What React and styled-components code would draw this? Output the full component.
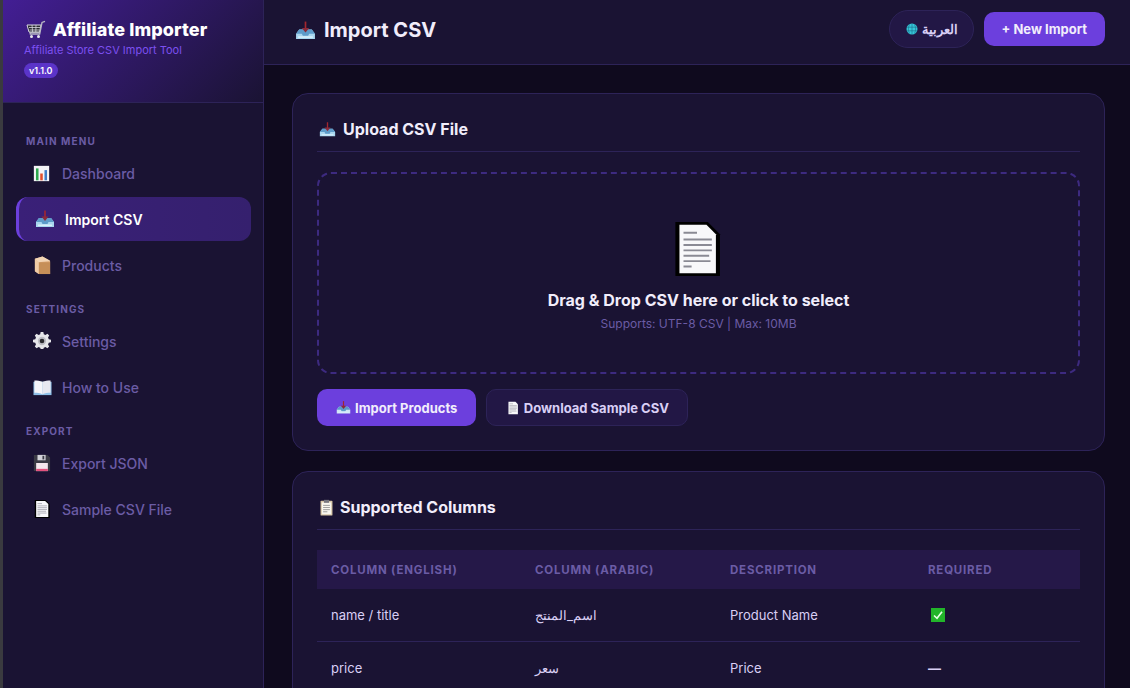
import styled, { createGlobalStyle } from 'styled-components';

const GlobalStyle = createGlobalStyle`
  html, body {
    margin: 0;
    height: 100%;
    overflow: hidden;
    background: #0f0a1e;
  }
  * { box-sizing: border-box; }
`;

const Layout = styled.div`
  display: flex;
  width: 1130px;
  height: 688px;
  overflow: hidden;
  font-family: Inter, "Noto Sans", sans-serif;
  background: #0f0a1e;
  border-left: 3px solid #3a3a3f;
`;

const Sidebar = styled.aside`
  width: 261px;
  flex-shrink: 0;
  background: #1a1333;
  border-right: 1px solid #2d2358;
`;

const Brand = styled.div`
  height: 103px;
  padding: 17px 22px 0 21px;
  background: linear-gradient(135deg, #431e94 0%, #1a1333 100%);
  border-bottom: 1px solid #2d2358;
`;

const BrandTitle = styled.h1`
  display: flex;
  align-items: center;
  gap: 7px;
  margin: 0 0 0 2px;
  height: 24px;
  font-size: 18px;
  font-weight: 800;
  color: #fff;
  letter-spacing: 0.1px;
`;

const BrandSub = styled.div`
  margin-top: 2px;
  font-size: 11px;
  line-height: 14px;
  color: #7c50f0;
`;

const Version = styled.span`
  display: inline-block;
  margin-top: 6px;
  padding: 0 5px;
  height: 15px;
  line-height: 15px;
  font-size: 9px;
  font-weight: 600;
  color: #fff;
  background: #5b34c9;
  border-radius: 8px;
`;

const Nav = styled.nav`
  padding: 31px 12px 0 13px;
`;

const NavLabel = styled.div`
  height: 14px;
  margin: ${(p) => (p.$first ? '0' : '15px')} 0 3px 10px;
  font-size: 10px;
  line-height: 14px;
  font-weight: 700;
  letter-spacing: 1.1px;
  color: #6b5ca5;
`;

const NavItem = styled.a`
  display: flex;
  align-items: center;
  gap: ${(p) => (p.$active ? '12px' : '11px')};
  height: 44px;
  margin-bottom: 2px;
  padding-left: ${(p) => (p.$active ? '16px' : '17px')};
  font-size: 14px;
  font-weight: ${(p) => (p.$active ? 600 : 500)};
  color: ${(p) => (p.$active ? '#fff' : '#6b5ca5')};
  border-radius: 12px;
  background: ${(p) => (p.$active ? 'linear-gradient(90deg, #3a2078, #35206e)' : 'transparent')};
  border-left: ${(p) => (p.$active ? '3px solid #6c3fdd' : '0')};
`;

const IconSlot = styled.span`
  display: flex;
  width: 18px;
  flex-shrink: 0;
`;

const Content = styled.main`
  flex: 1;
  min-width: 0;
`;

const Topbar = styled.header`
  display: flex;
  align-items: center;
  justify-content: space-between;
  height: 65px;
  padding: 0 25px 6px 31px;
  background: #1a1333;
  border-bottom: 1px solid #2d2358;
`;

const PageTitle = styled.h2`
  display: flex;
  align-items: center;
  gap: 8px;
  margin: 2px 0 0;
  font-size: 20px;
  font-weight: 700;
  color: #f1edfb;
`;

const TopActions = styled.div`
  display: flex;
  align-items: center;
  gap: 10px;
`;

const LangButton = styled.button`
  display: flex;
  align-items: center;
  gap: 4px;
  height: 38px;
  padding: 0 15px 0 16px;
  font-family: inherit;
  font-size: 13px;
  font-weight: 600;
  color: #d9cff5;
  background: #221745;
  border: 1px solid #2d2358;
  border-radius: 19px;
`;

const Button = styled.button`
  display: inline-flex;
  align-items: center;
  justify-content: center;
  gap: 4px;
  height: ${(p) => p.$height || '37px'};
  padding: 0 ${(p) => p.$pad || '19px'};
  font-family: inherit;
  font-size: 13px;
  font-weight: 700;
  color: ${(p) => (p.$ghost ? '#d9cff5' : '#f1edfb')};
  background: ${(p) => (p.$ghost ? '#221745' : '#6c3fdd')};
  border: ${(p) => (p.$ghost ? '1px solid #2d2358' : '0')};
  border-radius: 10px;
`;

const Body = styled.div`
  padding: 28px 25px 0 28px;
`;

const Card = styled.section`
  padding: 24px;
  margin-bottom: 20px;
  background: #1a1333;
  border: 1px solid #2d2358;
  border-radius: 16px;
`;

const CardTitle = styled.h3`
  display: flex;
  align-items: center;
  gap: ${(p) => p.$gap};
  height: 34px;
  margin: 0 0 20px;
  padding: 0 0 11px ${(p) => p.$indent};
  font-size: 16px;
  font-weight: 700;
  color: #f1edfb;
  border-bottom: 1px solid #2d2358;
`;

const Dropzone = styled.div`
  display: flex;
  flex-direction: column;
  align-items: center;
  height: 202px;
  padding-top: 48px;
  border: 2px dashed #3d2a80;
  border-radius: 14px;
`;

const DropIcon = styled.div`
  display: flex;
  margin-right: 4px;
`;

const DropTitle = styled.div`
  margin-top: 14px;
  font-size: 16px;
  line-height: 20px;
  font-weight: 700;
  color: #f1edfb;
`;

const DropHint = styled.div`
  margin-top: 6px;
  font-size: 12px;
  line-height: 16px;
  color: #6b5ca5;
`;

const Actions = styled.div`
  display: flex;
  gap: 10px;
  margin-top: 15px;
`;

const Table = styled.table`
  width: 763px;
  border-collapse: separate;
  border-spacing: 0;
  table-layout: fixed;
`;

const Th = styled.th`
  width: ${(p) => p.$w};
  height: 39px;
  padding: 0 14px;
  text-align: left;
  font-size: 11.5px;
  font-weight: 700;
  letter-spacing: 0.8px;
  color: #6b5ca5;
  background: #251848;
`;

const Td = styled.td`
  height: 53px;
  padding: 0 14px;
  font-size: 13px;
  color: #d9cff5;
  border-bottom: 1px solid #2d2358;
`;

const CheckWrap = styled.span`
  display: flex;
  margin-left: 3px;
`;

const Dash = styled.span`
  font-weight: 700;
`;

const Svg = ({ size = 18, children, view = '0 0 20 20' }) => (
  <svg width={size} height={size} viewBox={view} style={{ flexShrink: 0 }}>
    {children}
  </svg>
);

const CartIcon = ({ size }) => (
  <Svg size={size}>
    <path d="M1 6h14l-1.5 7H3z" fill="#2b2b33" stroke="#d8d8e0" strokeWidth="1" />
    <path d="M3 8.5h11M3.5 11h10M6 6l.6 7M10 6l-.2 7" stroke="#d8d8e0" strokeWidth=".8" fill="none" />
    <path d="M13.5 13.6H4l.3 1.6h9.4L16 3.5l3-1.2" stroke="#b9b9c4" strokeWidth="1.3" fill="none" />
    <circle cx="5.5" cy="17.5" r="1.5" fill="#e8e8ee" />
    <circle cx="12.5" cy="17.5" r="1.5" fill="#e8e8ee" />
  </Svg>
);

const ChartIcon = ({ size }) => (
  <Svg size={size}>
    <rect x="1" y="1" width="18" height="18" fill="#f4f4f6" />
    <rect x="3.5" y="4" width="3" height="14" fill="#2fa84f" />
    <rect x="8.5" y="10" width="3" height="8" fill="#e0502f" />
    <rect x="13.5" y="6" width="3" height="12" fill="#3f7fc8" />
  </Svg>
);

const InboxIcon = ({ size, tone = '#a9d6ef' }) => (
  <Svg size={size}>
    <path d="M1 13l3-4h12l3 4v5H1z" fill={tone} />
    <path d="M1 13h5.5l1 2h5l1-2H19l-3-4H4z" fill="#5d9bc9" />
    <rect x="9.2" y="1.5" width="1.6" height="7" fill="#a3262e" />
    <path d="M6.5 7.5h7L10 12z" fill="#8a2a3a" />
    <rect x="3" y="15.5" width="14" height="1.5" fill="#d8effa" />
  </Svg>
);

const BoxIcon = ({ size }) => (
  <Svg size={size}>
    <path d="M2 3l8-2.5L18 5v14H6l-4-3z" fill="#e2b488" />
    <path d="M6 6.5h12V19H6z" fill="#c68f58" />
    <path d="M2 3l4 3.5V19l-4-3z" fill="#f0cba6" />
    <path d="M2 3L10 .5 18 5 6 6.5z" fill="#f2d5b5" />
  </Svg>
);

const GearIcon = ({ size }) => (
  <Svg size={size}>
    <path
      d="M8.5 1h3l.5 2.5 1.8.8L16 3l2 2-1.3 2.2.8 1.8 2.5.5v3l-2.5.5-.8 1.8L18 17l-2 2-2.2-1.3-1.8.8-.5 1.5h-3l-.5-1.5-1.8-.8L4 19l-2-2 1.3-2.2-.8-1.8L0 12.5v-3l2.5-.5.8-1.8L2 5l2-2 2.2 1.3L8 3.5z"
      fill="#e6e6ea"
      transform="translate(0 -1)"
    />
    <circle cx="10" cy="10" r="4.6" fill="#bdbdc4" />
    <circle cx="10" cy="10" r="2.6" fill="#2a2a2e" />
  </Svg>
);

const BookIcon = ({ size }) => (
  <Svg size={size}>
    <path d="M0.5 4h19v14h-19z" fill="#8fc0e8" />
    <path d="M1.5 2.5c3 0 6 .3 8.5 1.5v13c-2.5-1-5.5-1.5-8.5-1.5z" fill="#f6f6fa" />
    <path d="M18.5 2.5c-3 0-6 .3-8.5 1.5v13c2.5-1 5.5-1.5 8.5-1.5z" fill="#e8e8f0" />
  </Svg>
);

const SaveIcon = ({ size }) => (
  <Svg size={size}>
    <path d="M1 1h15l3 3v15H1z" fill="#3a3a44" />
    <rect x="5" y="1" width="9" height="6" fill="#d2d2d8" />
    <rect x="10.5" y="2" width="2" height="4" fill="#3a3a44" />
    <rect x="3.5" y="10" width="13" height="9" fill="#f5e8ee" />
    <rect x="3.5" y="16.5" width="13" height="2.5" fill="#e2527e" />
  </Svg>
);

const PageIcon = ({ size, border }) => (
  <Svg size={size}>
    {border && <path d="M2 0h12l4.5 4.5V20H2z" fill="#000" />}
    <path d="M3.5 1h10l3.5 3.5V19H3.5z" fill="#f8f8fa" />
    <path d="M5 4h5M5 6.5h10.5M5 8.5h10.5M5 10.5h10.5M5 12.5h9.5M5 14.5h10M5 16.5h3" stroke="#8a8a94" strokeWidth=".7" />
  </Svg>
);

const ClipboardIcon = ({ size }) => (
  <Svg size={size}>
    <rect x="3" y="2" width="14" height="17.5" rx="1" fill="#d8c8a8" />
    <rect x="4.5" y="4" width="11" height="14" fill="#f8f6ef" />
    <rect x="7" y="1" width="6" height="3.5" fill="#77777f" />
    <path d="M6 7.5h8M6 10h8M6 12.5h8M6 15h5" stroke="#777" strokeWidth=".8" />
  </Svg>
);

const CheckIcon = () => (
  <Svg size={14} view="0 0 14 14">
    <rect width="14" height="14" fill="#22b52a" />
    <path d="M3 7.5l3 2.8L11 3.8" fill="none" stroke="#e8ffe8" strokeWidth="1.6" />
  </Svg>
);

const GlobeIcon = () => (
  <Svg size={12} view="0 0 12 12">
    <circle cx="6" cy="6" r="5.5" fill="#35c6d8" />
    <path d="M1 4.2h10M1 7.8h10M6 .5v11M3.5 1.5c-1.5 3-1.5 6 0 9M8.5 1.5c1.5 3 1.5 6 0 9" stroke="#1c6d8a" strokeWidth=".6" fill="none" />
  </Svg>
);

const menu = [
  {
    label: 'MAIN MENU',
    items: [
      { name: 'Dashboard', icon: <ChartIcon size={17} /> },
      { name: 'Import CSV', icon: <InboxIcon size={20} />, active: true },
      { name: 'Products', icon: <BoxIcon size={19} /> },
    ],
  },
  {
    label: 'SETTINGS',
    items: [
      { name: 'Settings', icon: <GearIcon size={18} /> },
      { name: 'How to Use', icon: <BookIcon size={19} /> },
    ],
  },
  {
    label: 'EXPORT',
    items: [
      { name: 'Export JSON', icon: <SaveIcon size={18} /> },
      { name: 'Sample CSV File', icon: <PageIcon size={18} border /> },
    ],
  },
];

const columns = [
  ['COLUMN (ENGLISH)', '204px'],
  ['COLUMN (ARABIC)', '195px'],
  ['DESCRIPTION', '198px'],
  ['REQUIRED', '166px'],
];

const App = () => (
  <Layout>
    <GlobalStyle />
    <Sidebar>
      <Brand>
        <BrandTitle>
          <CartIcon size={20} />
          Affiliate Importer
        </BrandTitle>
        <BrandSub>Affiliate Store CSV Import Tool</BrandSub>
        <Version>v1.1.0</Version>
      </Brand>
      <Nav>
        {menu.map((group, i) => (
          <div key={group.label}>
            <NavLabel $first={i === 0}>{group.label}</NavLabel>
            {group.items.map((item) => (
              <NavItem key={item.name} $active={item.active}>
                <IconSlot>{item.icon}</IconSlot>
                {item.name}
              </NavItem>
            ))}
          </div>
        ))}
      </Nav>
    </Sidebar>
    <Content>
      <Topbar>
        <PageTitle>
          <InboxIcon size={21} />
          Import CSV
        </PageTitle>
        <TopActions>
          <LangButton>
            <GlobeIcon />
            العربية
          </LangButton>
          <Button $height="34px" $pad="18px">+ New Import</Button>
        </TopActions>
      </Topbar>
      <Body>
        <Card>
          <CardTitle $gap="7px" $indent="2px">
            <InboxIcon size={17} />
            Upload CSV File
          </CardTitle>
          <Dropzone>
            <DropIcon>
              <PageIcon size={54} border />
            </DropIcon>
            <DropTitle>Drag &amp; Drop CSV here or click to select</DropTitle>
            <DropHint>Supports: UTF-8 CSV | Max: 10MB</DropHint>
          </Dropzone>
          <Actions>
            <Button>
              <InboxIcon size={15} tone="#cfe6f5" />
              Import Products
            </Button>
            <Button $ghost $pad="18.5px">
              <PageIcon size={14} />
              Download Sample CSV
            </Button>
          </Actions>
        </Card>
        <Card>
          <CardTitle $gap="5px" $indent="1px">
            <ClipboardIcon size={17} />
            Supported Columns
          </CardTitle>
          <Table>
            <thead>
              <tr>
                {columns.map(([title, w]) => (
                  <Th key={title} $w={w}>{title}</Th>
                ))}
              </tr>
            </thead>
            <tbody>
              <tr>
                <Td>name / title</Td>
                <Td>اسم_المنتج</Td>
                <Td>Product Name</Td>
                <Td><CheckWrap><CheckIcon /></CheckWrap></Td>
              </tr>
              <tr>
                <Td>price</Td>
                <Td>سعر</Td>
                <Td>Price</Td>
                <Td><Dash>—</Dash></Td>
              </tr>
            </tbody>
          </Table>
        </Card>
      </Body>
    </Content>
  </Layout>
);

export default App;
